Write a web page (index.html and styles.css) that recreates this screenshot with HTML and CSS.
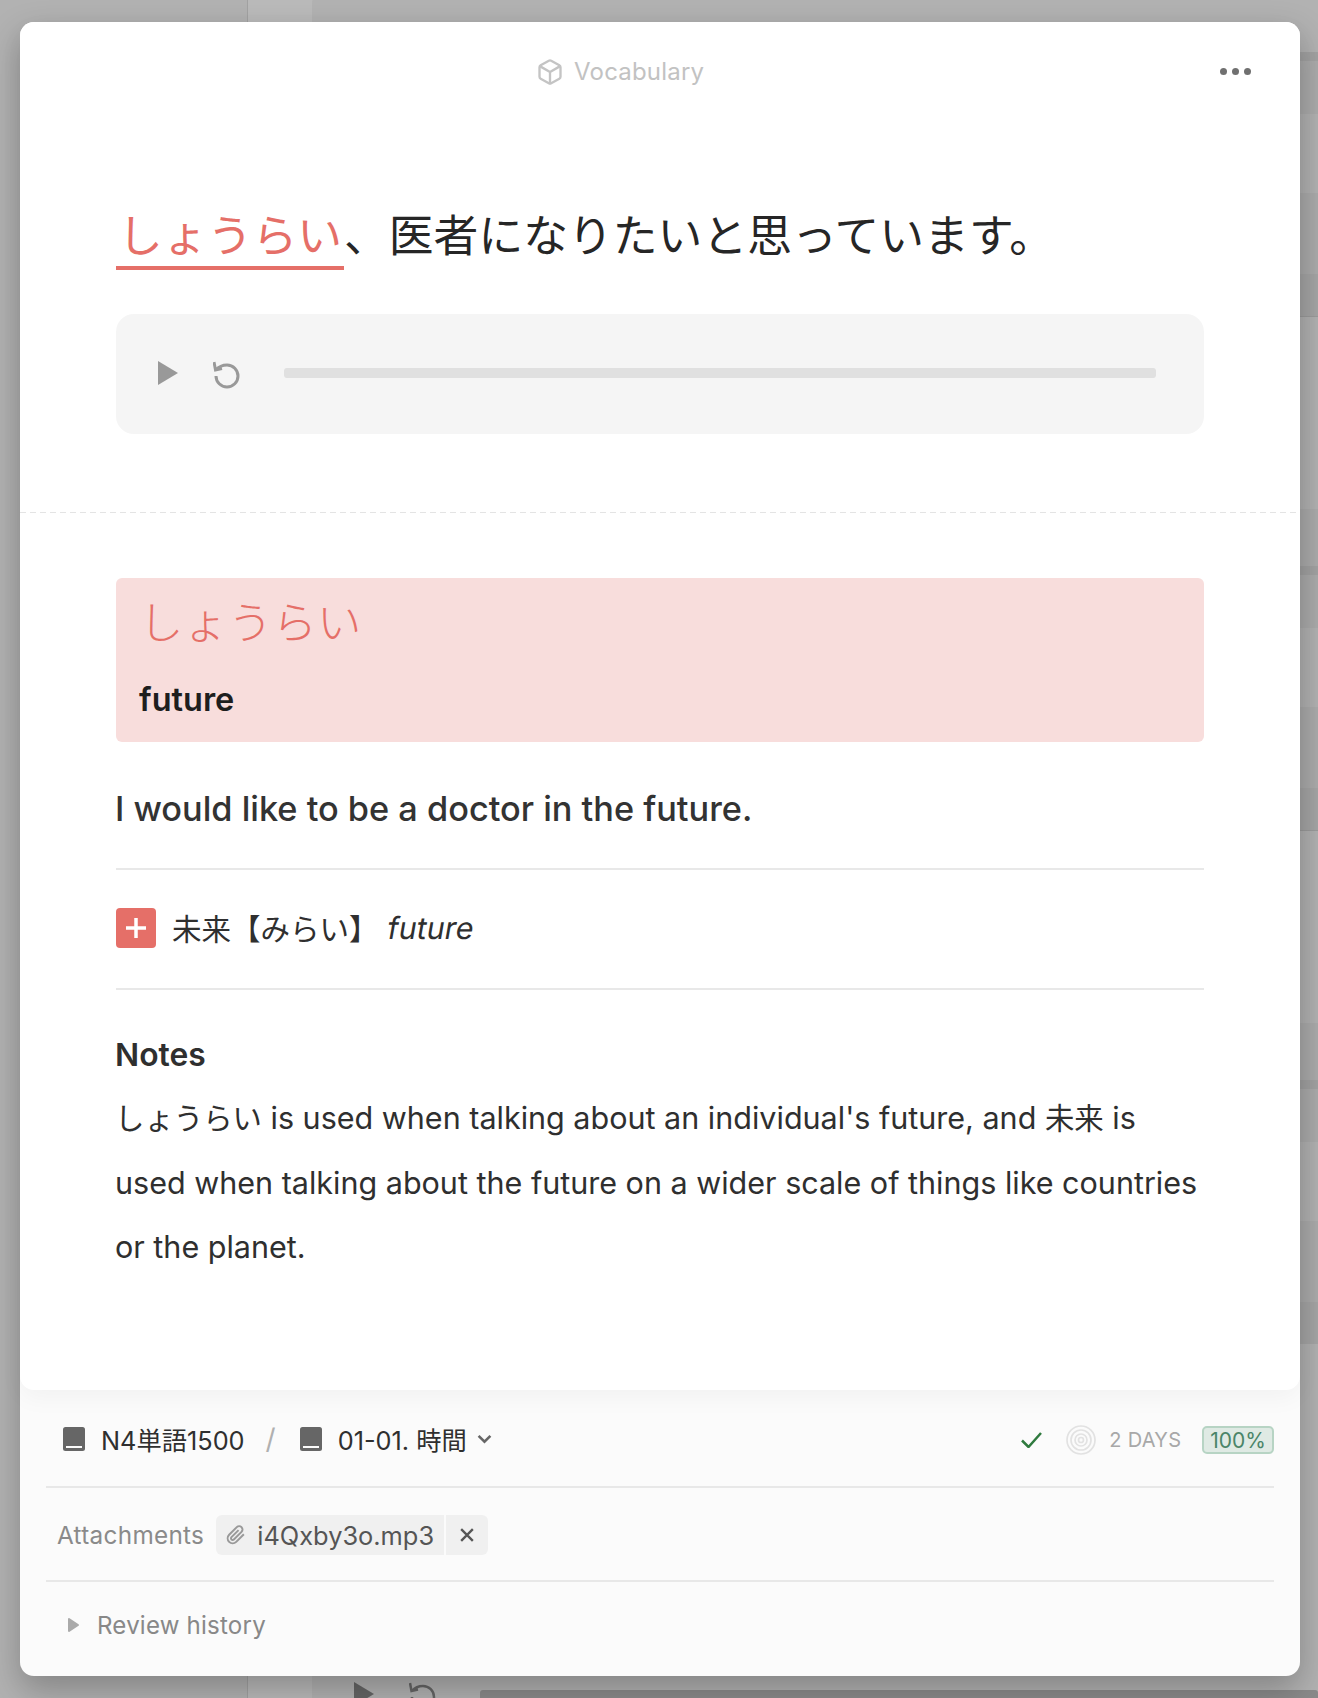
FILE: index.html
```html
<!DOCTYPE html>
<html lang="ja">
<head>
    <meta charset="UTF-8">
    <meta name="viewport" content="width=device-width, initial-scale=1.0">
    <title>Vocabulary</title>
    <link rel="stylesheet" href="styles.css">
</head>
<body>
    <!-- dimmed page behind the dialog -->
    <div class="backdrop">
        <div class="backdrop-main"></div>
        <div class="backdrop-panel">
            <div class="backdrop-bands"></div>
            <svg class="backdrop-play" viewBox="0 0 20 24"><path d="M0 0L20 12L0 24z"/></svg>
            <svg class="backdrop-undo" viewBox="0 0 27 28"><path d="M1 1L2.500 9L9 7.500M3 9C6 5.500 9.500 4 14 4A11 11 0 1 1 3 15"/></svg>
            <div class="backdrop-bar"></div>
        </div>
    </div>

    <div class="modal">
        <div class="card">
            <header class="card-header">
                <div class="type-label">
                    <svg class="icon-box" viewBox="0 0 24 24">
                        <path d="M21 16V8a2 2 0 0 0-1-1.730l-7-4a2 2 0 0 0-2 0l-7 4A2 2 0 0 0 3 8v8a2 2 0 0 0 1 1.730l7 4a2 2 0 0 0 2 0l7-4A2 2 0 0 0 21 16z"/>
                        <path d="M3.270 6.960L12 12.010l8.730-5.050M12 22.080V12"/>
                    </svg>
                    <span>Vocabulary</span>
                </div>
                <div class="menu-dots"><i></i><i></i><i></i></div>
            </header>

            <h1 class="sentence"><span class="target">しょうらい</span>、医者になりたいと思っています。</h1>

            <div class="audio">
                <svg class="icon-play" viewBox="0 0 20 24"><path d="M0 0L20 12L0 24z"/></svg>
                <svg class="icon-undo" viewBox="0 0 27 28"><path d="M1 1L2.500 9L9 7.500M3 9C6 5.500 9.500 4 14 4A11 11 0 1 1 3 15"/></svg>
                <div class="audio-bar"></div>
            </div>

            <div class="dashed"></div>

            <div class="answer">
                <div class="answer-word">しょうらい</div>
                <div class="answer-meaning">future</div>
            </div>

            <p class="translation">I would like to be a doctor in the future.</p>

            <div class="related">
                <div class="plus"><svg viewBox="0 0 20 20"><path d="M10 0V20M0 10H20"/></svg></div>
                <span class="related-word">未来【みらい】</span>
                <em class="related-meaning">future</em>
            </div>

            <section class="notes">
                <h2>Notes</h2>
                <p><span class="jp">しょうらい</span> is used when talking about an individual's future, and <span class="jp">未来</span> is<br>used when talking about the future on a wider scale of things like countries or the planet.</p>
            </section>
        </div>

        <footer class="meta">
            <div class="meta-row crumbs">
                <svg class="icon-book" viewBox="0 0 22 24"><rect width="22" height="24" rx="2.500"/><rect class="book-line" x="3" y="19" width="16" height="2"/></svg>
                <span class="crumb">N4単語1500</span>
                <span class="slash">/</span>
                <svg class="icon-book" viewBox="0 0 22 24"><rect width="22" height="24" rx="2.500"/><rect class="book-line" x="3" y="19" width="16" height="2"/></svg>
                <span class="crumb">01-01. 時間</span>
                <svg class="icon-chevron" viewBox="0 0 14 9"><path d="M1.500 1.500L7 7L12.500 1.500"/></svg>

                <div class="status">
                    <svg class="icon-check" viewBox="0 0 21 16"><path d="M1 8.500L7.500 15L20 1"/></svg>
                    <svg class="icon-rings" viewBox="0 0 30 30">
                        <circle cx="15" cy="15" r="14"/>
                        <circle cx="15" cy="15" r="10"/>
                        <circle cx="15" cy="15" r="6"/>
                        <circle cx="15" cy="15" r="2.500"/>
                    </svg>
                    <span class="days">2 DAYS</span>
                    <span class="score">100%</span>
                </div>
            </div>

            <div class="meta-row attachments">
                <span class="attach-label">Attachments</span>
                <div class="chip">
                    <svg class="icon-clip" viewBox="0 0 24 24"><path d="M21.440 11.050l-9.190 9.190a6 6 0 0 1-8.490-8.490l9.190-9.190a4 4 0 0 1 5.660 5.660l-9.200 9.190a2 2 0 0 1-2.830-2.830l8.490-8.480"/></svg>
                    <span>i4Qxby3o.mp3</span>
                </div>
                <div class="chip-close"><svg viewBox="0 0 12 12"><path d="M1 1L11 11M11 1L1 11"/></svg></div>
            </div>

            <div class="meta-row history">
                <svg class="icon-caret" viewBox="0 0 13 16"><path d="M2 2L11 8L2 14z"/></svg>
                <span>Review history</span>
            </div>
        </footer>
    </div>
</body>
</html>
```

FILE: styles.css
```css
* {
    box-sizing: border-box;
}

body {
    margin: 0;
    height: 100vh;
    overflow: hidden;
    padding: 22px 18px 22px 20px;
    position: relative;
    background-color: #b2b2b2;
    font-family: Inter, "Noto Sans CJK JP", sans-serif;
    color: #2f2f2f;
}

svg {
    display: block;
    flex: none;
}

/* page behind the dialog */
.backdrop {
    position: absolute;
    inset: 0;
    overflow: hidden;
}

.backdrop-main {
    position: absolute;
    left: 247px;
    top: 0;
    right: 0;
    bottom: 0;
    background-color: #bababa;
    border-left: 1px solid #a2a2a2;
}

.backdrop-panel {
    position: absolute;
    left: 312px;
    top: -10px;
    right: 0;
    bottom: 0;
    border-top-left-radius: 14px;
    background-color: #b2b2b2;
}

.backdrop-bands {
    position: absolute;
    left: 0;
    right: 0;
    top: 62px;
    height: 1292px;
    background: linear-gradient(to bottom,
        #a3a3a3 0 9px,
        #acacac 9px 62px,
        #b2b2b2 62px 141px,
        #acacac 141px 222px,
        #a6a6a6 222px 264px,
        #9c9c9c 264px 265px,
        #b2b2b2 265px 457px,
        #acacac 457px 514px) 0 0 / 100% 514px repeat-y;
}

.backdrop-play {
    position: absolute;
    left: 42px;
    top: 1692px;
    width: 20px;
    height: 24px;
    fill: #666;
}

.backdrop-undo {
    position: absolute;
    left: 97px;
    top: 1692px;
    width: 27px;
    height: 28px;
    fill: none;
    stroke: #666;
    stroke-width: 2.500;
}

.backdrop-bar {
    position: absolute;
    left: 168px;
    right: 0;
    top: 1700px;
    height: 20px;
    background-color: #8b8b8b;
    border-radius: 3px;
}

/* dialog */
.modal {
    position: relative;
    height: 100%;
    background-color: #fbfbfb;
    border-radius: 14px;
    box-shadow: 0 14px 34px rgba(0, 0, 0, 0.26);
    display: flex;
    flex-direction: column;
}

.card {
    height: 1368px;
    background-color: #fff;
    border-radius: 14px;
    box-shadow: 0 8px 24px rgba(0, 0, 0, 0.04);
}

.card-header {
    height: 99px;
    padding: 0 49px 0 516px;
    display: flex;
    align-items: center;
    justify-content: space-between;
}

.type-label {
    display: flex;
    align-items: center;
    gap: 10px;
    font-size: 24px;
    letter-spacing: 0.2px;
    color: #c2c2c2;
}

.icon-box {
    width: 28px;
    height: 28px;
    fill: none;
    stroke: #c4c4c4;
    stroke-width: 2;
    stroke-linejoin: round;
}

.menu-dots {
    display: flex;
    gap: 5px;
}

.menu-dots i {
    width: 7px;
    height: 7px;
    border-radius: 50%;
    background-color: #707070;
}

.sentence {
    margin: 81px 96px 0;
    font-size: 44.800px;
    font-weight: 400;
    line-height: 68px;
    height: 68px;
    color: #262626;
}

.target {
    display: inline-block;
    padding: 0 2px;
    line-height: 60px;
    border-bottom: 4px solid #e56f68;
    color: #e56f68;
}

.audio {
    margin: 44px 96px 0;
    height: 120px;
    padding: 0 48px 0 42px;
    background-color: #f5f5f5;
    border-radius: 18px;
    display: flex;
    align-items: center;
}

.icon-play {
    width: 20px;
    height: 24px;
    fill: #999;
    margin-top: -2px;
}

.icon-undo {
    width: 27px;
    height: 28px;
    margin-left: 35px;
    margin-top: 2px;
    fill: none;
    stroke: #999;
    stroke-width: 3;
}

.audio-bar {
    flex: 1;
    height: 10px;
    margin-left: 44px;
    margin-top: -2px;
    background-color: #e0e0e0;
    border-radius: 3px;
}

.dashed {
    margin-top: 78px;
    height: 1px;
    background: repeating-linear-gradient(to right, #e4e4e4 0 6px, transparent 6px 10px);
}

.answer {
    margin: 65px 96px 0;
    height: 164px;
    padding: 13px 24px 0 23px;
    background-color: #f8dddc;
    border-radius: 6px;
}

.answer-word {
    font-size: 44.500px;
    font-weight: 300;
    line-height: 64px;
    color: #e56f68;
}

.answer-meaning {
    margin-top: 21px;
    font-size: 32.500px;
    font-weight: 600;
    line-height: 48px;
    color: #1e1e1e;
}

.translation {
    margin: 0 96px;
    height: 128px;
    padding-top: 41px;
    font-size: 34.300px;
    font-weight: 500;
    line-height: 52px;
    text-indent: -1px;
    border-bottom: 2px solid #e8e8e8;
    color: #333;
}

.related {
    margin: 0 96px;
    height: 120px;
    padding-bottom: 2px;
    display: flex;
    align-items: center;
    border-bottom: 2px solid #e8e8e8;
    font-size: 29.500px;
}

.plus {
    width: 40px;
    height: 40px;
    background-color: #e56f68;
    border-radius: 4px;
    display: flex;
    align-items: center;
    justify-content: center;
}

.plus svg {
    width: 20px;
    height: 20px;
    fill: none;
    stroke: #fff;
    stroke-width: 3.500;
}

.related-word {
    margin: -2px 0 0 16px;
}

/* upright Inter leaned over: the real italic has a descending f */
.related-meaning {
    display: inline-block;
    margin: -2px 0 0 9px;
    font-size: 30.500px;
    font-style: normal;
    transform: skewX(-10deg);
}

.notes {
    margin: 0 96px 0 95px;
    padding-top: 40px;
}

.notes h2 {
    margin: 0;
    font-size: 31.800px;
    font-weight: 600;
    line-height: 50px;
}

.notes p {
    margin: 6px 0 0;
    font-size: 30.530px;
    line-height: 64px;
}

.jp {
    font-size: 29.400px;
}

/* bottom info */
.meta {
    flex: 1;
    padding: 0 26px;
}

.meta-row {
    display: flex;
    align-items: center;
}

.crumbs {
    height: 98px;
    padding: 2px 0 0 17px;
    border-bottom: 2px solid #e8e8e8;
    font-size: 25.300px;
}

.icon-book {
    width: 22px;
    height: 24px;
    fill: #666;
}

.book-line {
    fill: #fbfbfb;
}

.crumb {
    margin-left: 16px;
}

.slash {
    margin: 0 24px 0 21px;
    color: #b0b0b0;
    font-size: 28px;
}

.crumb + .icon-chevron {
    margin-left: 10px;
}

.icon-chevron {
    width: 15px;
    height: 10px;
    fill: none;
    stroke: #666;
    stroke-width: 2.400;
}

.status {
    margin: 2px 0 0 auto;
    display: flex;
    align-items: center;
}

.icon-check {
    width: 21px;
    height: 16px;
    fill: none;
    stroke: #2f7a3e;
    stroke-width: 2.500;
}

.icon-rings {
    width: 30px;
    height: 30px;
    margin-left: 24px;
    fill: none;
    stroke: #e2e2e2;
    stroke-width: 1.700;
}

.days {
    margin-left: 13px;
    font-size: 20px;
    letter-spacing: 0.3px;
    color: #a8a8a8;
}

.score {
    margin-left: 21px;
    height: 28px;
    padding: 0 6px;
    display: flex;
    align-items: center;
    font-size: 21px;
    color: #4a8568;
    background-color: #dfeae4;
    border: 2px solid #b7d4c4;
    border-radius: 5px;
}

.attachments {
    height: 94px;
    padding: 2px 0 0 11px;
    border-bottom: 2px solid #e8e8e8;
}

.attach-label {
    font-size: 24.300px;
    letter-spacing: 0.3px;
    color: #8a8a8a;
}

.chip {
    margin-left: 12px;
    height: 40px;
    padding: 0 10px 0 10px;
    display: flex;
    align-items: center;
    gap: 11px;
    background-color: #f0f0f0;
    border-radius: 6px 0 0 6px;
    font-size: 25.400px;
    color: #555;
}

.icon-clip {
    width: 20px;
    height: 20px;
    fill: none;
    stroke: #999;
    stroke-width: 2.400;
}

.chip-close {
    margin-left: 2px;
    width: 42px;
    height: 40px;
    display: flex;
    align-items: center;
    justify-content: center;
    background-color: #f0f0f0;
    border-radius: 0 6px 6px 0;
}

.chip-close svg {
    width: 14px;
    height: 14px;
    fill: none;
    stroke: #555;
    stroke-width: 2;
}

.history {
    height: 90px;
    padding: 0 0 4px 21px;
    font-size: 24.100px;
    letter-spacing: 0.2px;
    color: #888;
}

.icon-caret {
    width: 13px;
    height: 16px;
    fill: #aaa;
    stroke: #aaa;
    stroke-width: 2;
    stroke-linejoin: round;
    margin-right: 17px;
}
```
